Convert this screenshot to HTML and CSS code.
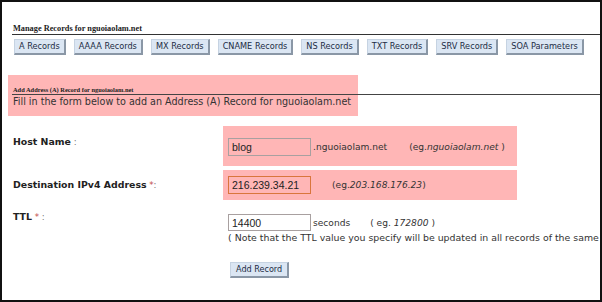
FILE: index.html
```html
<!doctype html>
<html lang="en">
  <head>
    <meta charset="UTF-8" />
    <title>Add Address (A) Record</title>
    <link rel="stylesheet" href="styles.css">
  </head>
  <body>
    <div class="frame">
      <h2 class="manage-title">Manage Records for nguoiaolam.net</h2>
      <div class="rec-buttons">
        <button>A Records</button>
        <button>AAAA Records</button>
        <button>MX Records</button>
        <button>CNAME Records</button>
        <button>NS Records</button>
        <button>TXT Records</button>
        <button>SRV Records</button>
        <button>SOA Parameters</button>
      </div>

      <div class="add-box">
        <h3 class="add-title">Add Address (A) Record for nguoiaolam.net</h3>
        <p class="add-intro">Fill in the form below to add an Address (A) Record for nguoiaolam.net</p>
      </div>

      <form class="record-form">
        <div class="label row-host"><b>Host Name</b> :</div>
        <div class="value hl row-host">
          <input class="field" type="text" value="blog" />
          <span class="suffix">.nguoiaolam.net</span>
          <span class="eg">(eg.<i>nguoiaolam.net</i> )</span>
        </div>

        <div class="label row-ip"><b>Destination IPv4 Address</b> <span class="req">*</span>:</div>
        <div class="value hl row-ip">
          <input class="field active" type="text" value="216.239.34.21" />
          <span class="eg eg-ip">(eg.<i>203.168.176.23</i>)</span>
        </div>

        <div class="label row-ttl"><b>TTL</b> <span class="req">*</span> :</div>
        <div class="value row-ttl">
          <input class="field white" type="text" value="14400" />
          <span class="suffix">seconds</span>
          <span class="eg eg-ttl">( eg. <i>172800</i> )</span>
          <div class="note">( Note that the TTL value you specify will be updated in all records of the same name )</div>
        </div>

        <div class="value row-submit">
          <button type="button" class="add-btn">Add Record</button>
        </div>
      </form>
    </div>
  </body>
</html>
```

FILE: styles.css
```css
:root {
  --pink: #ffb6b6;
  --text: #333333;
  --btn-bg: #dbe6f3;
}

* {
  margin: 0;
  padding: 0;
  box-sizing: border-box;
}

body {
  background: #ffffff;
  font-family: "DejaVu Sans", Verdana, sans-serif;
  color: var(--text);
}

.frame {
  width: 602px;
  height: 302px;
  border: 2px solid #111111;
  overflow: hidden;
  background: #ffffff;
}

.manage-title {
  margin: 22px 0 0 10px;
  padding-left: 1px;
  font: bold 8.3px/10px "Liberation Serif", "Times New Roman", serif;
  color: #222222;
  border-bottom: 1px solid #333333;
}

.rec-buttons {
  display: flex;
  gap: 8px;
  margin-top: 4px;
  padding-left: 12px;
}

button {
  flex-shrink: 0;
  white-space: nowrap;
  font: 9.1px/13px "DejaVu Sans Condensed", "DejaVu Sans", sans-serif;
  color: #1c2c44;
  background: var(--btn-bg);
  border: 1px solid #c6d3e2;
  border-right: 2px solid #8a97a6;
  border-bottom: 2px solid #8a97a6;
  padding: 0 4px;
  height: 16px;
}

.add-box {
  margin: 20px 0 0 6px;
  height: 41px;
  background: linear-gradient(var(--pink), var(--pink)) no-repeat 0 0 / 350px 100%;
}

.add-title {
  margin-left: 4px;
  padding: 11px 0 0 1px;
  font: bold 6.4px/8px "Liberation Serif", "Times New Roman", serif;
  color: #222222;
  border-bottom: 1px solid #444444;
}

.add-intro {
  margin-left: 5px;
  font-size: 9.6px;
  line-height: 13px;
  white-space: nowrap;
}

.record-form {
  display: grid;
  grid-template-columns: 210px 294px;
  padding-left: 11px;
  margin-top: 10px;
}

.label {
  grid-column: 1;
  font-size: 8.6px;
  line-height: 12px;
  color: #777777;
  white-space: nowrap;
}

.label b {
  font-size: 9.4px;
  color: #222222;
}

.req {
  color: #c24b4b;
}

.value {
  grid-column: 2;
  display: flex;
  align-items: center;
  flex-wrap: wrap;
  padding: 0 5px;
  font-size: 9.1px;
  white-space: nowrap;
}

.hl {
  background: var(--pink);
}

.field {
  width: 83px;
  height: 18px;
  padding: 0 3px;
  font: 10.5px "Liberation Sans", Arial, sans-serif;
  color: #222222;
  background: var(--pink);
  border: 1px solid #a8a0a0;
}

.field.active {
  border-color: #d9763c;
}

.field.white {
  background: #ffffff;
  height: 17px;
}

.suffix {
  margin-left: 2px;
}

.eg {
  margin-left: 22px;
}

.eg-ip {
  margin-left: 21px;
}

.eg-ttl {
  margin-left: 20px;
}

.row-host.label {
  padding-top: 10px;
}

.row-host.value {
  padding-top: 12px;
  padding-bottom: 10px;
}

.row-ip {
  margin-top: 4px;
}

.row-ip.label {
  padding-top: 9px;
}

.row-ip.value {
  padding-top: 6px;
  padding-bottom: 6px;
}

.row-ttl {
  margin-top: 14px;
}

.row-ttl.label {
  margin-top: 11px;
}

.note {
  width: 100%;
  font-size: 9.4px;
  line-height: 14px;
}

.row-submit {
  margin-top: 17px;
  padding-left: 7px;
}

.add-btn {
  font-size: 9px;
  padding: 0 5px;
}
```
